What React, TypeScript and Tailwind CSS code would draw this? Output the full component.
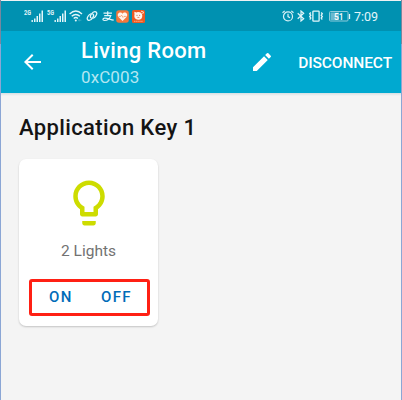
import React from 'react';

function Signal({ label }: { label: string }) {
  return (
    <svg width="20" height="14" viewBox="0 0 20 14" fill="#e3f6fa">
      <text x="0" y="6.3" fontSize="7" fontWeight="700" fontFamily="Roboto, sans-serif" textLength="7" lengthAdjust="spacingAndGlyphs">{label}</text>
      <path d="M7.500 11h1.400v2H7.500zM10 9.500h1.500V13H10zM12.500 7H14v6h-1.500zM15 4.500h1.500V13H15zM17.500 1.500H19V13h-1.500z" />
    </svg>
  );
}

function Wifi() {
  return (
    <svg width="14" height="12" viewBox="0 0 14 12" fill="none" stroke="#e3f6fa" strokeWidth="1.4">
      <path d="M.6 3.9Q6.8-1.7 13 3.9M2.700 6.300q4.100-3.600 8.200 0M4.700 8.500q2.100-1.800 4.200 0" />
      <circle cx="6.8" cy="10.4" r="1" fill="#e3f6fa" stroke="none" />
      <path d="M9 10.2h3.400M10.200 9.100v2.300" stroke="#3fabc4" strokeWidth=".9" />
    </svg>
  );
}

function Link() {
  return (
    <svg width="12" height="12" viewBox="0 0 12 12" fill="none" stroke="#e3f6fa" strokeWidth="1.3" strokeLinecap="round">
      <path d="M5.2 8.100C3.900 7 4.400 5.400 5.300 4.200C6.600 2.400 8.300 1 9.900 1.900c1.600 1 .8 3-.4 4.500C8.900 7.200 8.200 7.800 7.600 8" />
      <path d="M6.8 3.900C8.100 5 7.600 6.600 6.700 7.800C5.400 9.600 3.700 11 2.100 10.100c-1.600-1-.8-3 .4-4.500C3.100 4.800 3.800 4.200 4.400 4" />
    </svg>
  );
}

function Alipay() {
  return (
    <svg width="12" height="12" viewBox="0 0 12 12" fill="none" stroke="#e3f6fa" strokeWidth="1.200">
      <path d="M1.500 3.200h8.500M5.700 1.200v4.300M2.200 5.600h6.600C7.800 8.500 5.200 10.500 2.500 10.500C.4 10.500 .4 8.300 2.700 8.100C5.400 7.900 8 9.500 11.700 10.200" />
    </svg>
  );
}

function HealthBadge() {
  return (
    <svg width="13" height="13" viewBox="0 0 13 13">
      <rect x=".2" y=".2" width="12.600" height="12.600" rx="2.800" fill="#f4773b" />
      <path d="M6.500 11L2.700 7.300C.8 5.200 2.100 2.500 4.300 2.500c1 0 1.700.5 2.200 1.200c.5-.7 1.200-1.200 2.200-1.200c2.200 0 3.500 2.700 1.600 4.800z" fill="#fff5ed" />
      <path d="M2.600 6.400h2l1-1.200L7 7.400l1-1h2.500" fill="none" stroke="#f4773b" strokeWidth=".6" />
    </svg>
  );
}

function MascotBadge() {
  return (
    <svg width="13" height="13" viewBox="0 0 13 13">
      <rect width="13" height="13" rx="1.500" fill="#ed5a22" />
      <path d="M2.300 1.700l2.400 .7C7 1.300 10 2.500 10.300 5.200c.3 3.200-1.900 4.700-4.100 4.500C3.500 9.500 1.700 7.300 2.500 4.700z" fill="#fff5ed" />
      <path d="M9 1.200l2.600.8-1 2" fill="none" stroke="#ffe3d2" strokeWidth=".9" />
      <circle cx="5" cy="5.200" r=".5" fill="#bd3d16" />
      <circle cx="7.700" cy="5.200" r=".5" fill="#bd3d16" />
      <path d="M5.400 7.400h2" stroke="#ed5a22" strokeWidth=".7" />
      <path d="M2 11.300h9" stroke="#ffc19d" strokeWidth=".8" strokeDasharray="1.500 .6" />
    </svg>
  );
}

function Alarm() {
  return (
    <svg width="12" height="12" viewBox="0 0 12 12" fill="none" stroke="#d9f1f6" strokeWidth="1.200">
      <circle cx="6" cy="6.400" r="4.500" />
      <path d="M6 3.800v2.800l2 1.100M.5 2.800L2.700.9M11.500 2.800L9.300.9" />
    </svg>
  );
}

function Bluetooth() {
  return (
    <svg width="8" height="12" viewBox="0 0 8 12" fill="none" stroke="#e3f6fa" strokeWidth="1.200">
      <path d="M.7 3.200l6 5.500L4 11V1l2.700 2.300-6 5.500" />
    </svg>
  );
}

function Vibrate() {
  return (
    <svg width="16" height="12" viewBox="0 0 16 12" fill="none" stroke="#e3f6fa" strokeWidth="1.300">
      <rect x="4.900" y="1.100" width="6.200" height="10" rx=".6" />
      <path d="M2.800 2.500L1.700 3.800l1.100 1.400-1.100 1.400 1.100 1.500-1.100 1.400M13.200 2.500l1.100 1.300-1.100 1.400 1.100 1.400-1.100 1.500 1.100 1.400" />
    </svg>
  );
}

function Battery() {
  return (
    <svg width="22" height="11" viewBox="0 0 22 11">
      <rect x=".5" y=".5" width="18.500" height="9.500" rx="1" fill="none" stroke="#8ecbdb" />
      <rect x="1.500" y="1.500" width="8.500" height="7.500" fill="#6bb9ce" />
      <path d="M20.500 3v5" stroke="#e3f6fa" strokeWidth="1.300" />
      <text x="5" y="8.700" fontSize="9" fontWeight="500" fontFamily="Roboto, sans-serif" fill="#fff" textLength="9.500" lengthAdjust="spacingAndGlyphs">51</text>
    </svg>
  );
}

export default function App() {
  return (
    <div className="h-[400px] w-[402px] overflow-hidden bg-linear-to-b from-[#78879f] from-[44px] to-[#8ba6d5] to-[44px] px-px font-['Roboto',sans-serif]">
      <div className="h-full border-t border-[#eef2f4] bg-[#f4f4f4]">
        <div className="flex h-[30px] items-center bg-[#0091b1] pl-[23px]">
          <Signal label="2G" />
          <div className="ml-[3px] flex"><Signal label="5G" /></div>
          <div className="ml-[2px] flex"><Wifi /></div>
          <div className="ml-[3px] flex"><Link /></div>
          <div className="ml-[4px] flex"><Alipay /></div>
          <div className="ml-[2px] flex"><HealthBadge /></div>
          <div className="ml-[3px] flex"><MascotBadge /></div>
          <div className="ml-auto flex items-center pr-[23px]">
            <Alarm />
            <div className="ml-[3px] flex"><Bluetooth /></div>
            <div className="ml-[3px] flex"><Vibrate /></div>
            <div className="ml-[5px] flex"><Battery /></div>
            <span className="ml-[3px] w-6 text-[12.5px] leading-[15px] whitespace-nowrap text-[#e3f6fa]">7:09</span>
          </div>
        </div>

        <header className="flex h-[62px] items-center bg-[#00a9d0] pl-[19px] pr-[9px] text-white">
          <svg width="24" height="24" viewBox="0 0 24 24" fill="currentColor">
            <path d="M21 11H7.830l5.590-5.590L12 4l-8 8 8 8 1.410-1.410L7.830 13H21v-2z" />
          </svg>
          <div className="ml-[36px] w-[130px] pt-[3px] whitespace-nowrap">
            <h1 className="pl-px text-[22px] leading-[27px] font-medium tracking-[0.3px]">Living Room</h1>
            <p className="pl-px text-[17px] leading-[26px] tracking-[0.1px] text-[#b3e6f1]">0xC003</p>
          </div>
          <svg className="ml-[40px]" width="24" height="24" viewBox="0 0 24 24" fill="currentColor">
            <path d="M3 17.250V21h3.750L17.810 9.940l-3.750-3.750L3 17.250zM20.710 7.040a1 1 0 0 0 0-1.410l-2.340-2.340a1 1 0 0 0-1.410 0l-1.830 1.830 3.750 3.750 1.830-1.830z" />
          </svg>
          <button className="ml-auto pt-[2px] text-[15.5px] leading-5 font-medium tracking-[-0.1px]">DISCONNECT</button>
        </header>
        <div className="h-[3px] bg-linear-to-b from-[#d5dfe2] to-[#f4f4f4]" />

        <main className="px-[18px] pt-[18px]">
          <h2 className="text-[22px] leading-[28px] font-medium tracking-[0.38px] whitespace-nowrap text-[#141414]">Application Key 1</h2>
          <section className="mt-[17px] flex h-[167px] w-[139px] flex-col items-center rounded-[7px] bg-white shadow-[0_1px_2px_rgba(0,0,0,0.2)]">
            <svg className="mt-[17px]" width="54" height="54" viewBox="0 0 24 24" fill="#cddc00">
              <path d="M9 21c0 .550.450 1 1 1h4c.550 0 1-.450 1-1v-1H9v1zm3-19C8.140 2 5 5.140 5 9c0 2.380 1.190 4.470 3 5.740V17c0 .550.450 1 1 1h6c.550 0 1-.450 1-1v-2.260c1.810-1.270 3-3.360 3-5.740 0-3.860-3.140-7-7-7zm2.850 11.100l-.850.600V16h-4v-2.300l-.850-.600A4.997 4.997 0 0 1 7 9c0-2.760 2.240-5 5-5s5 2.240 5 5c0 1.630-.800 3.160-2.150 4.100z" />
            </svg>
            <p className="mt-[11px] text-[15.5px] leading-5 text-[#727272]">2 Lights</p>
            <div className="mt-[18px] ml-[2px] flex h-[37px] w-[121px] items-center rounded-[3px] border-[3px] border-[#ff2014] pb-[2px] pl-[17px] text-[15px] leading-5 font-medium tracking-[1.3px] text-[#006bb8]">
              <button className="w-[52px] text-left">ON</button>
              <button>OFF</button>
            </div>
          </section>
        </main>
      </div>
    </div>
  );
}
